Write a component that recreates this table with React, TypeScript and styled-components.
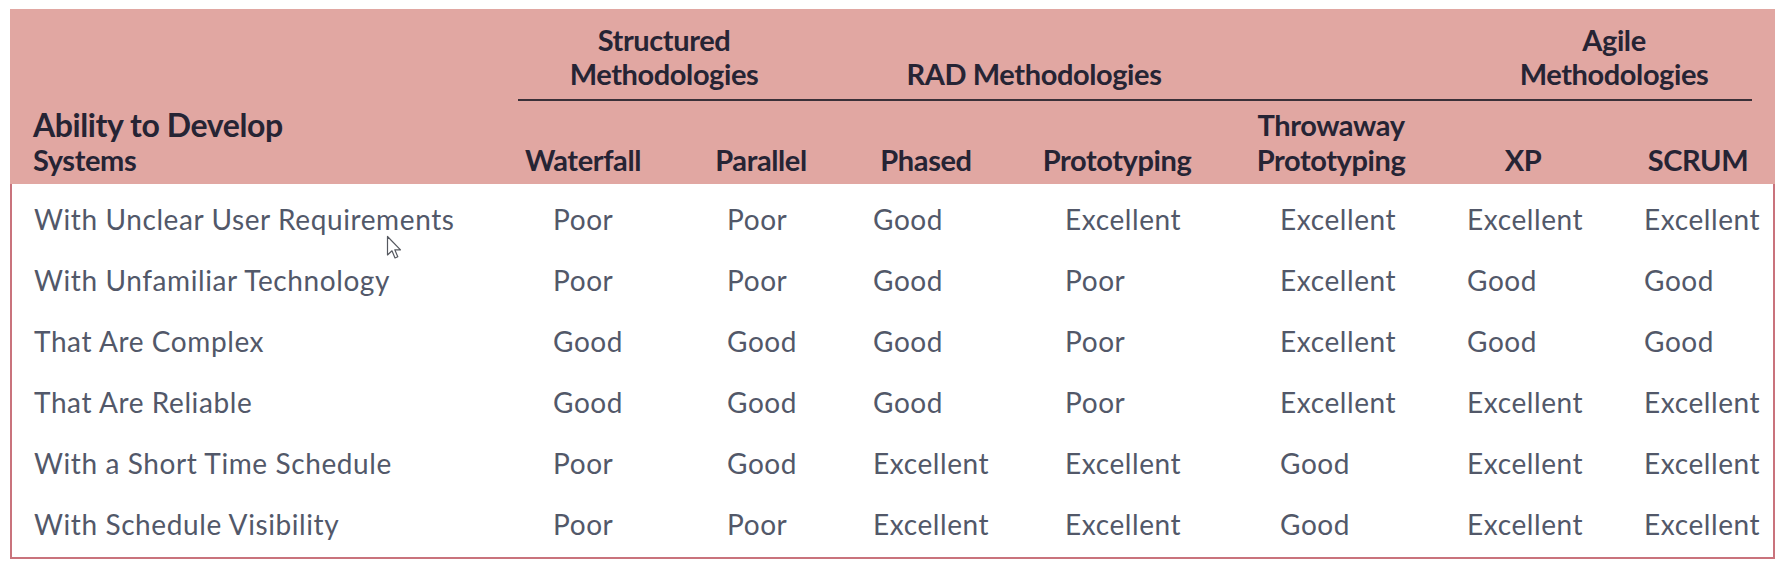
import React from 'react';
import styled, { createGlobalStyle } from 'styled-components';

type Rating = 'Poor' | 'Good' | 'Excellent';

interface Row {
  label: string;
  values: Rating[];
}

const rows: Row[] = [
  { label: 'With Unclear User Requirements', values: ['Poor', 'Poor', 'Good', 'Excellent', 'Excellent', 'Excellent', 'Excellent'] },
  { label: 'With Unfamiliar Technology', values: ['Poor', 'Poor', 'Good', 'Poor', 'Excellent', 'Good', 'Good'] },
  { label: 'That Are Complex', values: ['Good', 'Good', 'Good', 'Poor', 'Excellent', 'Good', 'Good'] },
  { label: 'That Are Reliable', values: ['Good', 'Good', 'Good', 'Poor', 'Excellent', 'Excellent', 'Excellent'] },
  { label: 'With a Short Time Schedule', values: ['Poor', 'Good', 'Excellent', 'Excellent', 'Good', 'Excellent', 'Excellent'] },
  { label: 'With Schedule Visibility', values: ['Poor', 'Poor', 'Excellent', 'Excellent', 'Good', 'Excellent', 'Excellent'] },
];

const columns: string[][] = [
  ['Waterfall'],
  ['Parallel'],
  ['Phased'],
  ['Prototyping'],
  ['Throwaway', 'Prototyping'],
  ['XP'],
  ['SCRUM'],
];

const GlobalStyle = createGlobalStyle`
  html, body {
    margin: 0;
    padding: 0;
    background: #ffffff;
  }
  body {
    font-family: Lato, "Open Sans", sans-serif;
  }
`;

const Page = styled.div`
  padding: 9px 7px 0 10px;
`;

const Table = styled.div`
  width: 1765px;
  display: flex;
  flex-direction: column;
`;

const Header = styled.div`
  display: flex;
  background: #e1a7a2;
  height: 175px;
  box-sizing: border-box;
  padding: 14px 0 7px;
  color: #262434;
  font-weight: 700;
  font-size: 29px;
  letter-spacing: -0.4px;
`;

const TitleCell = styled.div`
  width: 508px;
  flex-shrink: 0;
  align-self: flex-end;
  padding-left: 23px;
  box-sizing: border-box;
  line-height: 35px;
`;

const TitleMain = styled.div`
  font-size: 32px;
`;

const HeaderRight = styled.div`
  flex: 1;
  display: flex;
  flex-direction: column;
`;

const GroupRow = styled.div`
  display: grid;
  grid-template-columns: 292px 448px 220px 272px;
  height: 68px;
  line-height: 34px;
`;

const GroupCell = styled.div`
  display: flex;
  flex-direction: column;
  justify-content: flex-end;
  align-items: center;
  text-align: center;
  white-space: nowrap;
`;

const Rule = styled.div`
  width: 1234px;
  height: 2px;
  background: #3a3038;
  margin-top: 8px;
`;

const LabelRow = styled.div`
  display: grid;
  grid-template-columns: 130px 226px 104px 278px 150px 234px 116px 1fr;
  margin-top: 6px;
  height: 70px;
  line-height: 35px;
`;

const LabelCell = styled.div`
  display: flex;
  flex-direction: column;
  justify-content: flex-end;
  align-items: center;
  white-space: nowrap;
`;

const Body = styled.div`
  position: relative;
  border: 2px solid #c9737c;
  border-top: none;
  padding: 4px 0 3px;
  display: flex;
  flex-direction: column;
`;

const BodyRow = styled.div`
  display: grid;
  grid-template-columns: 541px 174px 146px 192px 215px 187px 177px 1fr;
  height: 61px;
  align-items: center;
  font-size: 28px;
  letter-spacing: 0.6px;
  color: #525869;
`;

const RowLabel = styled.div`
  padding-left: 22px;
  white-space: nowrap;
`;

const Value = styled.div`
  white-space: nowrap;
`;

const Cursor = styled.svg`
  position: absolute;
  left: 374px;
  top: 51px;
`;

const App: React.FC = () => {
  return (
    <Page>
      <GlobalStyle />
      <Table>
        <Header>
          <TitleCell>
            <TitleMain>Ability to Develop</TitleMain>
            <div>Systems</div>
          </TitleCell>
          <HeaderRight>
            <GroupRow>
              <GroupCell>
                <span>Structured</span>
                <span>Methodologies</span>
              </GroupCell>
              <GroupCell>
                <span>RAD Methodologies</span>
              </GroupCell>
              <GroupCell />
              <GroupCell>
                <span>Agile</span>
                <span>Methodologies</span>
              </GroupCell>
            </GroupRow>
            <Rule />
            <LabelRow>
              {columns.map((lines) => (
                <LabelCell key={lines.join(' ')}>
                  {lines.map((line) => (
                    <span key={line}>{line}</span>
                  ))}
                </LabelCell>
              ))}
            </LabelRow>
          </HeaderRight>
        </Header>
        <Body>
          {rows.map((row) => (
            <BodyRow key={row.label}>
              <RowLabel>{row.label}</RowLabel>
              {row.values.map((v, i) => (
                <Value key={i}>{v}</Value>
              ))}
            </BodyRow>
          ))}
          <Cursor width="16" height="26" viewBox="0 0 16 26">
            <path
              d="M1.5 1.5 L1.5 20 L6 15.8 L9 23 L11.8 21.8 L8.8 14.8 L14.5 14.8 Z"
              fill="#ffffff"
              stroke="#55585f"
              strokeWidth="1.2"
              strokeLinejoin="round"
            />
          </Cursor>
        </Body>
      </Table>
    </Page>
  );
};

export default App;
